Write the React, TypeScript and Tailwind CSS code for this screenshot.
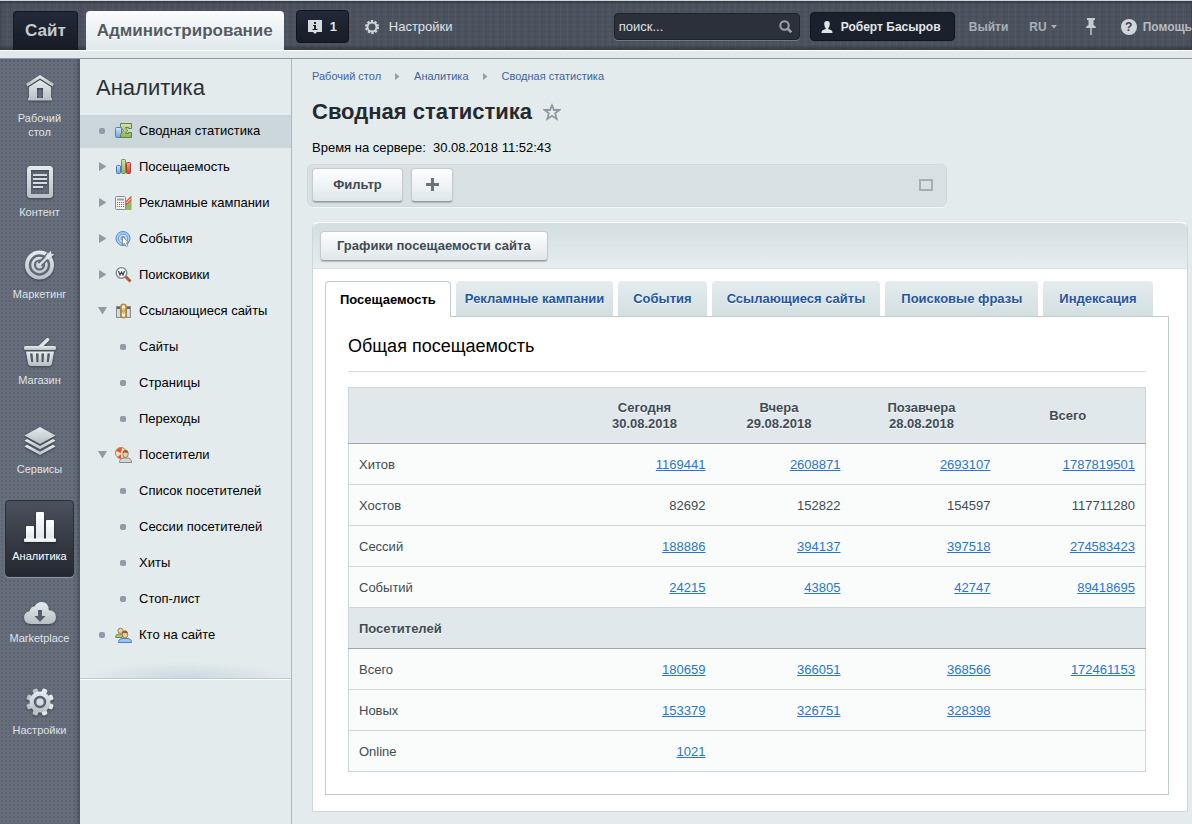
import { ReactNode } from "react";

/* ---------- sidebar icons ---------- */

function IconDefs() {
  return (
    <svg width="0" height="0" className="absolute" aria-hidden="true">
      <defs>
        <linearGradient id="metal" x1="0" y1="0" x2="0" y2="1">
          <stop offset="0" stopColor="#e6ecee" />
          <stop offset="1" stopColor="#b7c0c4" />
        </linearGradient>
        <linearGradient id="bright" x1="0" y1="0" x2="0" y2="1">
          <stop offset="0" stopColor="#ffffff" />
          <stop offset="1" stopColor="#dfe6e9" />
        </linearGradient>
        <linearGradient id="blueBar" x1="0" y1="0" x2="0" y2="1">
          <stop offset="0" stopColor="#d3e6fb" />
          <stop offset="1" stopColor="#6ea3e0" />
        </linearGradient>
        <linearGradient id="greenBar" x1="0" y1="0" x2="0" y2="1">
          <stop offset="0" stopColor="#d4e5ae" />
          <stop offset="1" stopColor="#8cb356" />
        </linearGradient>
        <linearGradient id="redBar" x1="0" y1="0" x2="0" y2="1">
          <stop offset="0" stopColor="#f4a597" />
          <stop offset="1" stopColor="#cf4434" />
        </linearGradient>
      </defs>
    </svg>
  );
}

const Home = () => (
  <svg width="28" height="26" viewBox="0 0 28 26" fill="url(#metal)">
    <path d="M14 0 28 9 26.5 11.5 14 3.4 1.5 11.5 0 9z" />
    <path d="M14 5 25 12V23H26V25.5H2V23H3V12zM11 13V23H17V13z" fillRule="evenodd" />
  </svg>
);

const Doc = () => (
  <svg width="26" height="32" viewBox="0 0 26 32">
    <path fill="url(#metal)" fillRule="evenodd" d="M3.500 0H22.500Q26 0 26 3.500V28.500Q26 32 22.500 32H3.500Q0 32 0 28.500V3.500Q0 0 3.500 0zM4 4V28H22V4z" />
    <path stroke="#d5dcdf" strokeWidth="2" d="M6 9H20M6 13H20M6 17H20M6 21H16" />
  </svg>
);

const Target = () => (
  <svg width="30" height="30" viewBox="0 0 30 30" fill="none">
    <circle cx="14.500" cy="15" r="14.500" fill="url(#metal)" />
    <circle cx="14.500" cy="15" r="9.500" stroke="#616877" strokeWidth="2.400" />
    <circle cx="14.500" cy="15" r="4.500" stroke="#616877" strokeWidth="2.200" />
    <path d="M15 14.500 24 5" stroke="#616877" strokeWidth="6" />
    <path d="M14.500 15 23 6.500" stroke="#dde3e6" strokeWidth="2.400" />
    <path d="M20.500 6 26 .8 26.300 3.700 29.200 4 24 9.500 21 9z" fill="#dde3e6" />
  </svg>
);

const Basket = () => (
  <svg width="32" height="28" viewBox="0 0 32 28">
    <path d="M16 9 23.500 1.800" stroke="#dfe5e8" strokeWidth="3.500" strokeLinecap="round" />
    <rect y="8" width="32" height="4" rx="1.500" fill="url(#metal)" />
    <path fill="url(#metal)" fillRule="evenodd" d="M2 13.500H30L28 25.500Q27.500 28 25 28H7Q4.500 28 4 25.500zM6 15.500 7.200 24H9.200L8.500 15.500zM12 15.500 12.400 24H14.500V15.500zM17.500 15.500V24H19.600L20 15.500zM23.500 15.500 22.800 24H24.800L26 15.500z" />
  </svg>
);

const Layers = () => (
  <svg width="32" height="28" viewBox="0 0 32 28" fill="url(#metal)">
    <path d="M16 0 31.500 8.500 16 17 .5 8.500z" />
    <path d="M3 12 16 19 29 12 31.500 13.700 16 22.300 .5 13.700z" />
    <path d="M3 17.800 16 24.800 29 17.800 31.500 19.500 16 28 .5 19.500z" />
  </svg>
);

const Bars = () => (
  <svg width="32" height="30" viewBox="0 0 32 30" fill="url(#bright)">
    <rect x="2" y="14" width="8" height="14" rx="1" />
    <rect x="12" y="0" width="8" height="28" rx="1" />
    <rect x="22" y="8" width="8" height="20" rx="1" />
    <rect y="26.500" width="32" height="3.500" rx="1" />
  </svg>
);

const Cloud = () => (
  <svg width="32" height="22" viewBox="0 0 32 22">
    <path fill="url(#metal)" d="M7 22Q0 21.500 0 15.500 0 10.500 5.500 9.300 6.500 4.500 10.500 4.500 13 0 17.500 0 24.500 0 24.800 8.200 32 8.500 32 15.200 32 21.500 25 22z" />
    <path fill="#565d6b" d="M14 8H18V14H21.500L16 20 10.500 14H14z" />
  </svg>
);

const Gear = () => (
  <svg width="28" height="28" viewBox="0 0 28 28">
    <g fill="url(#metal)">
      {[0, 45, 90, 135].map((a) => (
        <rect key={a} x="11.300" y="0" width="5.400" height="28" rx="1.500" transform={`rotate(${a + 22.5} 14 14)`} />
      ))}
    </g>
    <circle cx="14" cy="14" r="10.500" fill="url(#metal)" />
    <circle cx="14" cy="14" r="5" fill="#cbd2d6" stroke="#5a6170" strokeWidth="2.500" />
    <circle cx="14" cy="14" r="3" fill="#d5dbde" />
  </svg>
);

/* ---------- menu icons, 16px ---------- */

const Svg16 = ({ children }: { children: ReactNode }) => (
  <svg width="17" height="16" viewBox="0 0 17 16" fill="none" className="shrink-0">
    {children}
  </svg>
);

const SigmaIcon = () => (
  <Svg16>
    <rect x=".5" y="4.500" width="6" height="10" rx="1" fill="url(#blueBar)" stroke="#4a84c4" />
    <path d="M5.500.500H16.500V5.500H13.500V4.500H10.500L12.500 7.500 10.500 10.500H13.500V9.500H16.500V14.500H5.500V11.500L8.500 7.500 5.500 3.500z" fill="url(#greenBar)" stroke="#63843a" />
  </Svg16>
);

const ChartIcon = () => (
  <Svg16>
    <rect x="1.500" y="6.500" width="4" height="8" rx="1" fill="url(#blueBar)" stroke="#4178bb" />
    <rect x="6.500" y=".5" width="4" height="14" rx="1" fill="url(#greenBar)" stroke="#6c8f41" />
    <rect x="11.500" y="3.500" width="4" height="11" rx="1" fill="url(#redBar)" stroke="#a93a2c" />
  </Svg16>
);

const CalcIcon = () => (
  <Svg16>
    <path d="M11 6 16.500.5V6L11 11z" fill="#d9503f" />
    <path d="M10 15V11L16.500 6V15z" fill="#8fb85d" />
    <rect x=".5" y="1.500" width="10" height="13" rx="1" fill="#f0f0ef" stroke="#8b8b8b" />
    <path d="M2 4.500H9" stroke="#a0a0a0" strokeWidth="2" />
    <path d="M2 7.500H9M2 9.500H9M2 11.500H9" stroke="#777" strokeDasharray="1 1" />
    <path d="M11.500 8 16 3.500" stroke="#fff" />
  </Svg16>
);

const ClickIcon = () => (
  <Svg16>
    <circle cx="8" cy="7.500" r="7" fill="#a9cdf5" stroke="#4f8bd2" />
    <circle cx="8" cy="7.500" r="4.500" stroke="#5f98dc" fill="#cfe3fa" />
    <circle cx="8" cy="7.500" r="2" stroke="#4f8bd2" />
    <path d="M7.500 5.500V14L9.500 12.300 11 15.500 12.800 14.700 11.400 11.700H14z" fill="#fff" stroke="#777" strokeWidth=".8" />
  </Svg16>
);

const SearchEngineIcon = () => (
  <Svg16>
    <path d="M10.500 9.500 15.500 14.500" stroke="#b8562c" strokeWidth="3" />
    <circle cx="6.500" cy="6" r="5.300" fill="#f3f4f5" stroke="#7e8385" strokeWidth="1.300" />
    <path d="M3.500 4 5 8 6.500 5 8 8 9.500 4" stroke="#444" strokeWidth="1.200" />
  </Svg16>
);

const LinkIcon = () => (
  <Svg16>
    <rect x="1.500" y="3.500" width="4" height="11" fill="#d9dadb" stroke="#8b8b8b" />
    <rect x="11.500" y="3.500" width="4" height="11" fill="#d9dadb" stroke="#8b8b8b" />
    <path d="M2 5H5M12 5H15" stroke="#666" strokeWidth="2" />
    <rect x="6" y="1.200" width="5" height="6.500" rx="2.500" fill="#fbf3dc" stroke="#b98a35" strokeWidth="1.600" />
    <rect x="6" y="8.300" width="5" height="6.500" rx="2.500" fill="#fbf3dc" stroke="#b98a35" strokeWidth="1.600" />
    <path d="M8.500 5V11" stroke="#e3bf6b" strokeWidth="2" />
  </Svg16>
);

const VisitorIcon = () => (
  <Svg16>
    <circle cx="6" cy="6" r="5.500" fill="#f6dfd2" stroke="#d27a42" />
    <path d="M6 6 1 4Q3 .5 7 .8zM6 7 2 10.500 6 11.500z" fill="#dd5b33" />
    <path d="M4.500 15.500Q4.500 11 9 11H12Q16.500 11 16.500 15.500z" fill="#d4d6d5" stroke="#8a8c8b" />
    <ellipse cx="10.500" cy="7" rx="2.700" ry="3.600" fill="#f1cf9b" stroke="#8c6437" strokeWidth=".8" />
    <path d="M7.800 6Q8 3 10.500 3T13.300 6Q10 5 7.800 6z" fill="#8c6437" />
  </Svg16>
);

const OnlineIcon = () => (
  <Svg16>
    <path d="M.5 10.500Q.5 7 4 7H8L7 10.500z" fill="#a8c97b" stroke="#6d9140" />
    <circle cx="5.500" cy="3.800" r="2.600" fill="#f1cf9b" stroke="#8c6437" strokeWidth=".8" />
    <path d="M3.500 15.500Q3.500 11.500 8 11.500H12Q16.500 11.500 16.500 15.500z" fill="#9cc3f1" stroke="#4a80c6" />
    <ellipse cx="10" cy="7.500" rx="2.700" ry="3.500" fill="#f1cf9b" stroke="#8c6437" strokeWidth=".8" />
    <path d="M7.300 6.500Q7.500 3.600 10 3.600T12.800 6.500Q10 5.500 7.300 6.500z" fill="#8c6437" />
  </Svg16>
);

/* ---------- data ---------- */

const sections = [
  { title: "Рабочий стол", Icon: Home, box: "h-20 gap-[10px]" },
  { title: "Контент", Icon: Doc, box: "h-20 gap-[7px]" },
  { title: "Маркетинг", Icon: Target, box: "h-[82px] gap-[7px]" },
  { title: "Магазин", Icon: Basket, box: "h-[86px] gap-[7px]" },
  { title: "Сервисы", Icon: Layers, box: "h-[89px] gap-[7px]" },
  { title: "Аналитика", Icon: Bars, box: "mt-6 h-[77px] gap-[7px] pb-[13px]", active: true },
  { title: "Marketplace", Icon: Cloud, box: "h-[68px] gap-[7px]" },
  { title: "Настройки", Icon: Gear, box: "h-[92px] gap-[7px]" },
];

type MenuEntry = {
  title: string;
  Icon?: () => ReactNode;
  state?: "open" | "closed";
  selected?: boolean;
};

const menu: MenuEntry[] = [
  { title: "Сводная статистика", Icon: SigmaIcon, selected: true },
  { title: "Посещаемость", Icon: ChartIcon, state: "closed" },
  { title: "Рекламные кампании", Icon: CalcIcon, state: "closed" },
  { title: "События", Icon: ClickIcon, state: "closed" },
  { title: "Поисковики", Icon: SearchEngineIcon, state: "closed" },
  { title: "Ссылающиеся сайты", Icon: LinkIcon, state: "open" },
  { title: "Сайты" },
  { title: "Страницы" },
  { title: "Переходы" },
  { title: "Посетители", Icon: VisitorIcon, state: "open" },
  { title: "Список посетителей" },
  { title: "Сессии посетителей" },
  { title: "Хиты" },
  { title: "Стоп-лист" },
  { title: "Кто на сайте", Icon: OnlineIcon },
];

const tabs = ["Посещаемость", "Рекламные кампании", "События", "Ссылающиеся сайты", "Поисковые фразы", "Индексация"];

const traffic = [
  { name: "Хитов", values: ["1169441", "2608871", "2693107", "1787819501"], links: true },
  { name: "Хостов", values: ["82692", "152822", "154597", "117711280"], links: false },
  { name: "Сессий", values: ["188886", "394137", "397518", "274583423"], links: true },
  { name: "Событий", values: ["24215", "43805", "42747", "89418695"], links: true },
];

const visitors = [
  { name: "Всего", values: ["180659", "366051", "368566", "172461153"], links: true },
  { name: "Новых", values: ["153379", "326751", "328398", ""], links: true },
  { name: "Online", values: ["1021", "", "", ""], links: true },
];

/* ---------- layout ---------- */

function Header() {
  return (
    <header className="border-b border-[#8f989d] bg-[#e1e9ed]">
      <div className="flex h-[50px] items-center border-t border-[#cdd5d6] bg-[#4b525e] bg-[repeating-linear-gradient(90deg,rgba(255,255,255,0.03)_0_1px,transparent_1px_3px,rgba(0,0,0,0.04)_3px_4px,transparent_4px_7px),repeating-linear-gradient(0deg,rgba(255,255,255,0.02)_0_1px,transparent_1px_3px,rgba(0,0,0,0.03)_3px_4px,transparent_4px_5px)] pt-[2px] pl-[13px] text-[13px] whitespace-nowrap shadow-[inset_0_2px_2px_rgba(30,35,45,0.4),inset_0_-3px_3px_rgba(30,35,45,0.45)]">
        <a href="#site" className="flex h-[39px] shrink-0 items-center self-end rounded-t border border-b-0 border-[#14171f] bg-linear-to-b from-[#232939] to-[#171b26] px-[11px] text-[17px] font-bold text-[#c5cbd0]">
          Сайт
        </a>
        <a href="#admin" className="ml-2 flex h-[39px] shrink-0 items-center self-end rounded-t bg-linear-to-b from-[#fafbfc] to-[#e1e9ed] px-[11px] text-[17px] font-bold text-[#545b63] [text-shadow:0_1px_0_#fff]">
          Администрирование
        </a>
        <button className="ml-3 flex h-[33px] w-[53px] shrink-0 items-center gap-2 rounded border border-[#11141c] bg-linear-to-b from-[#232939] to-[#181c27] pl-[11px] font-bold text-[#dfe4e7]">
          <svg width="14" height="14" viewBox="0 0 14 14">
            <path d="M0 0H14V12H9L7 14 5 12H0z" fill="#d6dcdf" />
            <path d="M5 5H8V9H9.500V10H4.500V9H6V6H5zM6 2H8V4H6z" fill="#20242f" />
          </svg>
          1
        </button>
        <a href="#settings" className="ml-4 flex shrink-0 items-center gap-[10px] text-[#dfe3e6]">
          <svg width="14" height="14" viewBox="0 0 14 14" fill="none">
            <circle cx="7" cy="7" r="6" stroke="#cfd5d8" strokeWidth="2" strokeDasharray="2.300 1.470" />
            <circle cx="7" cy="7" r="4.500" stroke="#cfd5d8" strokeWidth="2" />
          </svg>
          Настройки
        </a>

        <div className="ml-auto flex shrink-0 items-center">
          <label className="flex h-[27px] w-[186px] items-center rounded-sm border border-[#1d212a] bg-[#2c303b] px-1 shadow-[0_1px_0_#717a82]">
            <input aria-label="поиск" placeholder="поиск..." className="min-w-0 flex-1 bg-transparent outline-none placeholder:text-[#dde2e4]" />
            <svg width="13" height="13" viewBox="0 0 13 13" fill="none" stroke="#9da3aa" strokeWidth="2" className="mr-[3px]">
              <circle cx="5.500" cy="5.500" r="4.200" />
              <path d="M8.500 8.500 12.300 12.300" strokeWidth="2.500" />
            </svg>
          </label>
          <a href="#user" className="ml-[10px] flex h-[29px] w-[145px] items-center gap-2 rounded border border-[#11141c] bg-[#1b202d] pl-[10px] text-xs font-bold text-[#e2e7e9]">
            <svg width="12" height="12" viewBox="0 0 12 12" fill="#dfe4e7">
              <path d="M6 0Q9 0 8.800 3T7.300 7V8Q12 9 11.500 12H.5Q0 9 4.700 8V7Q3.400 6 3.200 3T6 0z" />
            </svg>
            Роберт Басыров
          </a>
          <a href="#logout" className="ml-[14px] text-xs font-bold text-[#a9b0b6]">Выйти</a>
          <button className="ml-[21px] flex items-center gap-1 text-xs font-bold text-[#a9b0b6]">
            RU
            <svg width="6" height="4" viewBox="0 0 6 4" fill="#a9b0b6"><path d="M0 0H6L3 3.500z" /></svg>
          </button>
          <button aria-label="Закрепить" className="ml-7">
            <svg width="12" height="17" viewBox="0 0 10 17" fill="#c5cbcf">
              <path d="M1 0H9V2H7.500V7Q10 8 10 10H5.700V17H4.300V10H0Q0 8 2.500 7V2H1z" />
            </svg>
          </button>
          <a href="#help" className="ml-6 flex items-center gap-[6px] text-xs font-bold text-[#b5bcc1]">
            <span className="flex size-4 items-center justify-center rounded-full bg-[#d0d6d9] text-[#3d434e]">?</span>
            Помощь
          </a>
        </div>
      </div>
      <div className="h-2 border-t border-white" />
    </header>
  );
}

function Sidebar() {
  return (
    <nav className="w-20 shrink-0 bg-[#666d7b] bg-[radial-gradient(circle,#5b6270_0.8px,transparent_1px)] bg-[length:4px_4px] pr-[6px] pl-[5px] text-[11px] leading-[14px] text-[#dfe4e8] shadow-[inset_-4px_0_4px_-2px_rgba(40,45,55,0.45)]">
      {sections.map(({ title, Icon, box, active }) => (
        <a
          key={title}
          href={`#${title}`}
          className={`flex flex-col items-center justify-end text-center ${box} ${
            active ? "rounded border border-[#2a2e36] bg-linear-to-b from-[#4c515e] to-[#24272f] text-white shadow-[0_1px_0_#8e949f]" : ""
          }`}
        >
          <span className="drop-shadow-[0_1px_1px_rgba(0,0,0,0.4)]"><Icon /></span>
          <span>{title === "Рабочий стол" ? <>Рабочий<br />стол</> : title}</span>
        </a>
      ))}
    </nav>
  );
}

function Bullet() {
  return <span className="block size-[6px] shrink-0 rounded-[2px] bg-[#929ba5]" />;
}

function MenuRow({ item }: { item: MenuEntry }) {
  const { title, Icon, state, selected } = item;
  return (
    <li className={`mb-[3px] flex h-[33px] items-center pb-[2px] pl-[18px] ${selected ? "bg-[#ccd7db]" : ""}`}>
      {Icon ? (
        <span className="flex w-[17px] items-center">
          {state ? (
            <button aria-label={title} aria-expanded={state === "open"}>
              <svg width="9" height="9" viewBox="0 0 9 9" fill="#929ba5">
                <path d={state === "open" ? "M0 1H9L4.500 8.500z" : "M1 0V9L8.500 4.500z"} />
              </svg>
            </button>
          ) : (
            <span className="pl-px"><Bullet /></span>
          )}
        </span>
      ) : (
        <span className="flex w-[41px] pl-[22px]"><Bullet /></span>
      )}
      <a href={`#${title}`} className="flex items-center gap-[7px] text-black">
        {Icon && <Icon />}
        {title}
      </a>
    </li>
  );
}

function Menu() {
  return (
    <aside className="w-[212px] shrink-0 border-r border-[#a9b8c4] text-[13px]">
      <h2 className="px-4 pt-[15px] pb-[13px] text-[22px] leading-7 text-[#2b2f33]">Аналитика</h2>
      <ul>
        {menu.map((item) => (
          <MenuRow key={item.title} item={item} />
        ))}
      </ul>
      <div className="h-6 border-b border-[#b9c8d4] bg-[radial-gradient(ellipse_50%_70%_at_50%_100%,#ccd9e2,transparent)] shadow-[0_1px_0_#fff]" />
    </aside>
  );
}

function Crumb({ children }: { children: string }) {
  return <a href="#" className="text-[#3d63a0]">{children}</a>;
}

function CrumbArrow() {
  return (
    <svg width="5" height="7" viewBox="0 0 5 7" fill="#959ea6"><path d="M0 0 4.500 3.500 0 7z" /></svg>
  );
}

const buttonStyle = "rounded border border-[#c3cdd1] border-b-[#939da1] bg-linear-to-b from-white to-[#dfe7ea] font-bold text-[#3f4b54] shadow-[0_1px_1px_rgba(0,0,0,0.2)]";

function DataRow({ name, values, links }: { name: string; values: string[]; links: boolean }) {
  return (
    <tr className="h-[41px] border-t border-[#cdd7d9] bg-[#fafcfb] first:border-t-[#a3a5a9]">
      <th scope="row" className="px-[10px] pt-[2px] text-left font-normal">{name}</th>
      {values.map((v, i) => (
        <td key={i} className="px-[10px] pt-[2px] text-right">
          {links && v ? <a href="#" className="text-[#2675d7] underline">{v}</a> : v}
        </td>
      ))}
    </tr>
  );
}

function StatsTable() {
  return (
    <table className="w-full table-fixed border-collapse border border-[#cdd7d9] text-[13px] text-[#3f4b54]">
      <thead>
        <tr className="h-14 bg-[#e0e8eb] leading-4 [text-shadow:0_1px_0_#fff]">
          <td />
          <th className="w-[134px] pr-[10px] pl-[2px]">Сегодня<br />30.08.2018</th>
          <th className="w-[135px] pr-[10px] pl-[2px]">Вчера<br />29.08.2018</th>
          <th className="w-[150px] pr-[10px] pl-[2px]">Позавчера<br />28.08.2018</th>
          <th className="w-[145px] pr-[10px]">Всего</th>
        </tr>
      </thead>
      <tbody>
        {traffic.map((row) => (
          <DataRow key={row.name} {...row} />
        ))}
      </tbody>
      <tbody>
        <tr className="h-[41px] border-t border-[#cdd7d9] bg-[#e0e8eb] [text-shadow:0_1px_0_#fff]">
          <th colSpan={5} className="px-[10px] pt-[2px] text-left">Посетителей</th>
        </tr>
      </tbody>
      <tbody>
        {visitors.map((row) => (
          <DataRow key={row.name} {...row} />
        ))}
      </tbody>
    </table>
  );
}

function Tabs() {
  return (
    <div role="tablist" className="flex items-end gap-[5px] text-[13px] font-bold">
      {tabs.map((tab, i) =>
        i === 0 ? (
          <button key={tab} role="tab" aria-selected="true" className="relative -mb-px h-9 rounded-t-sm border border-b-0 border-[#c0cccf] bg-white px-[14px] text-black">
            {tab}
          </button>
        ) : (
          <button key={tab} role="tab" aria-selected="false" className={`h-[35px] rounded-t-sm bg-linear-to-b from-[#e4ecee] to-[#d3dfe1] text-[#2255a4] [text-shadow:0_1px_0_#fff] ${i === 1 ? "px-[9px]" : i > 3 ? "px-4" : "px-[15px]"}`}>
            {tab}
          </button>
        )
      )}
    </div>
  );
}

export default function App() {
  return (
    <div className="flex min-h-screen flex-col bg-[#e3ebed] font-['Liberation_Sans',Arial,sans-serif]">
      <IconDefs />
      <Header />
      <div className="flex flex-1">
        <Sidebar />
        <Menu />
        <main className="min-w-0 flex-1 pr-1 pb-3 pl-5">
          <nav className="flex items-center gap-[14px] pt-[9px] text-[11px] leading-4">
            <Crumb>Рабочий стол</Crumb>
            <CrumbArrow />
            <Crumb>Аналитика</Crumb>
            <CrumbArrow />
            <Crumb>Сводная статистика</Crumb>
          </nav>

          <h1 className="mt-3 flex items-center gap-[11px] text-[22px] leading-8 font-bold text-[#24292d]">
            Сводная статистика
            <svg width="18" height="18" viewBox="0 0 18 18" fill="none" stroke="#8f98a5" strokeWidth="1.800">
              <path d="M9 2.300 11 7H16.300L12.200 10.400 13.700 15.900 9 12.800 4.300 15.900 5.800 10.400 1.700 7H7z" />
            </svg>
          </h1>

          <p className="mt-3 text-[13px] leading-4 text-black">
            Время на сервере:&nbsp; 30.08.2018 11:52:43
          </p>

          <div className="mt-2 -ml-[5px] flex h-[43px] max-w-[640px] items-center gap-2 rounded-md border border-[#cfd8da] bg-[#d8e0e3] px-1 pb-[2px] shadow-[0_1px_0_#f3f7f8]">
            <button className={`h-[34px] w-[91px] text-[13px] ${buttonStyle}`}>Фильтр</button>
            <button aria-label="Добавить" className={`flex h-[34px] w-[42px] items-center justify-center ${buttonStyle}`}>
              <svg width="13" height="13" viewBox="0 0 13 13"><path d="M5 0H8V5H13V8H8V13H5V8H0V5H5z" fill="#6b747b" /></svg>
            </button>
            <button aria-label="Развернуть" className="mr-[9px] ml-auto h-3 w-[14px] border-2 border-[#a6b0b3]" />
          </div>

          <section className="mt-[15px] rounded-t-md border border-t-white border-[#cdd8da] bg-white">
            <div className="flex h-[46px] items-center rounded-t-md border-b border-[#d8e0e2] bg-linear-to-b from-[#d3dee0] to-[#e7edf0] px-[7px]">
              <button className={`h-[30px] px-4 text-[13px] ${buttonStyle}`}>Графики посещаемости сайта</button>
            </div>
            <div className="px-3 pt-3 pr-[18px] pb-4">
              <Tabs />
              <div className="border border-[#c0cccf] px-[22px] pb-[22px]">
                <h2 className="mb-[15px] border-b border-[#d5dadb] pt-4 pb-3 text-lg leading-[26px] text-black">Общая посещаемость</h2>
                <StatsTable />
              </div>
            </div>
          </section>
        </main>
      </div>
    </div>
  );
}
